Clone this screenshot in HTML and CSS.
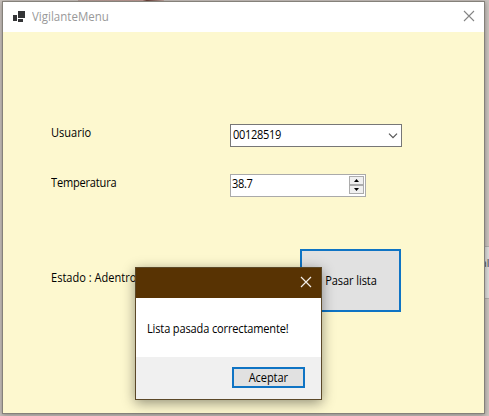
FILE: index.html
```html
<!DOCTYPE html>
<html lang="es">
<head>
<meta charset="utf-8">
<title>VigilanteMenu</title>
<link rel="stylesheet" href="styles.css">
</head>
<body>
<div class="backdrop"><div class="blob"></div><div class="behind">al</div></div>
<main class="window">
  <header class="titlebar">
    <svg class="app-icon" width="12" height="11" viewBox="0 0 12 11"><path fill="#333436" d="M0 4h4v6H0zM5 0h7v7H5zM5 8h5v3H5z"/></svg>
    <span class="title text">VigilanteMenu</span>
    <svg class="close" width="12" height="12" viewBox="0 0 12 12"><path d="M1 1l10 10M11 1L1 11" stroke="#858585" stroke-width="1.1"/></svg>
  </header>
  <form class="form">
    <div class="row">
      <label class="label"><span class="text">Usuario</span></label>
      <div class="combo"><span class="text digits">00128519</span><svg class="chevron" width="10" height="6" viewBox="0 0 10 6"><path d="M1 .7l4 4 4-4" fill="none" stroke="#555" stroke-width="1.2"/></svg></div>
    </div>
    <div class="row">
      <label class="label"><span class="text temp">Temperatura</span></label>
      <div class="numeric"><span class="text digits">38.7</span>
        <div class="spin">
          <span class="step"><svg width="5" height="3" viewBox="0 0 5 3"><path d="M0 3L2.500 0 5 3z"/></svg></span>
          <span class="step"><svg width="5" height="3" viewBox="0 0 5 3"><path d="M0 0l2.500 3L5 0z"/></svg></span>
        </div>
      </div>
    </div>
    <div class="row action">
      <span class="label state"><span class="text">Estado : Adentro</span></span>
      <button type="button" class="button pass"><span class="text centered">Pasar lista</span></button>
    </div>
  </form>
</main>
<section class="dialog">
  <header class="dialog-bar"><svg width="12" height="12" viewBox="0 0 12 12"><path d="M1 1l10 10M11 1L1 11" stroke="#f4efe9" stroke-width="1.2"/></svg></header>
  <p class="message"><span class="text notice">Lista pasada correctamente!</span></p>
  <footer class="dialog-foot"><button type="button" class="button accept"><span class="text centered">Aceptar</span></button></footer>
</section>
</body>
</html>
```
FILE: styles.css
```css
* { box-sizing: border-box; }
body {
  margin: 0;
  width: 489px;
  height: 416px;
  position: relative;
  overflow: hidden;
  background: #cbc4bf;
  color: #000;
  font: 12px/16px "Open Sans", "Noto Sans", sans-serif;
}
svg { display: block; flex: none; }
.text {
  display: inline-block;
  transform: scaleX(.92);
  transform-origin: left center;
  white-space: nowrap;
}
.centered { transform-origin: center; letter-spacing: -.1px; }
.backdrop { position: absolute; inset: 0; overflow: hidden; }
.blob {
  position: absolute;
  left: 78px;
  top: 0;
  width: 86px;
  height: 3px;
  background: linear-gradient(90deg, #b9a09a, #c29c95 75%, #6b4038 80%, #c5aaa3);
}
.behind {
  position: absolute;
  left: 480px;
  top: 246px;
  width: 20px;
  height: 53px;
  border: 1px solid #b0aeac;
  background: #dcdbda;
  color: #666;
  font-size: 10px;
  font-weight: 600;
  line-height: 33px;
}
.window {
  position: absolute;
  left: 2px;
  top: 1px;
  width: 483px;
  height: 413px;
  border: 1px solid #85817a;
  background: #fdf8cf;
  box-shadow: 0 1px 5px rgba(0, 0, 0, .35);
}
.titlebar {
  display: flex;
  align-items: center;
  height: 30px;
  padding: 0 9px 2px 10px;
  background: #fff;
}
.title {
  padding-top: 2px;
  margin-left: 7px;
  color: #999;
  transform: scaleX(.96);
}
.close { margin-left: auto; }
.form { padding: 92px 0 0 48px; }
.row { display: flex; height: 50px; align-items: flex-start; }
.label { width: 179px; padding-top: 1px; }
.temp { letter-spacing: -.2px; }
.digits { letter-spacing: -.34px; }
.combo {
  display: flex;
  align-items: center;
  justify-content: space-between;
  width: 172px;
  height: 23px;
  padding: 0 3px 1px 2px;
  border: 1px solid #777;
  background: #fff;
}
.chevron { margin-top: 2px; }
.numeric {
  display: flex;
  justify-content: space-between;
  width: 136px;
  height: 23px;
  padding: 1px;
  border: 1px solid #aaa;
  background: #fff;
}
.spin { width: 15px; height: 19px; display: flex; flex-direction: column; }
.step {
  display: flex;
  align-items: center;
  justify-content: center;
  height: 9px;
  border: 1px solid #acacac;
  background: #f0f0f0;
}
.action { padding-top: 25px; height: 88px; }
.state { width: 249px; padding-top: 21px; }
.button {
  padding: 0;
  border: 2px solid #0f74c4;
  background: #e1e1e1;
  color: #000;
  font: inherit;
}
.pass { width: 101px; height: 63px; }
.dialog {
  position: absolute;
  left: 135px;
  top: 267px;
  width: 187px;
  height: 133px;
  border: 1px solid #5b4828;
  background: #fff;
  box-shadow: 0 3px 12px rgba(0, 0, 0, .42);
}
.dialog-bar {
  display: flex;
  justify-content: flex-end;
  height: 30px;
  padding: 8px 9px;
  background: #583303;
}
.message {
  height: 59px;
  margin: 0;
  padding: 23px 0 0 11px;
}
.notice { letter-spacing: -.16px; }
.dialog-foot {
  display: flex;
  justify-content: flex-end;
  height: 42px;
  padding: 10px 16px;
  background: #f0f0f0;
}
.accept { width: 73px; height: 21px; line-height: 17px; }
```
